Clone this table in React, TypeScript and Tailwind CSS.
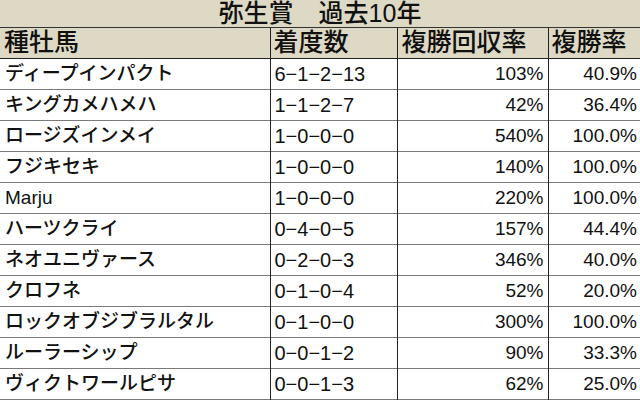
const rows = [
  ["ディープインパクト", "6−1−2−13", "103%", "40.9%"],
  ["キングカメハメハ", "1−1−2−7", "42%", "36.4%"],
  ["ロージズインメイ", "1−0−0−0", "540%", "100.0%"],
  ["フジキセキ", "1−0−0−0", "140%", "100.0%"],
  ["Marju", "1−0−0−0", "220%", "100.0%"],
  ["ハーツクライ", "0−4−0−5", "157%", "44.4%"],
  ["ネオユニヴァース", "0−2−0−3", "346%", "40.0%"],
  ["クロフネ", "0−1−0−4", "52%", "20.0%"],
  ["ロックオブジブラルタル", "0−1−0−0", "300%", "100.0%"],
  ["ルーラーシップ", "0−0−1−2", "90%", "33.3%"],
  ["ヴィクトワールピサ", "0−0−1−3", "62%", "25.0%"],
];

const font = { fontFamily: '"Liberation Sans", "Noto Sans CJK JP", sans-serif' };

export default function App() {
  return (
    <div className="w-[640px] h-[400px] overflow-hidden bg-white text-[#111]" style={font}>
      {/* title */}
      <div className="h-[28px] bg-[#ddd9c4] border-b border-[#333] flex justify-center">
        <div className="text-[25px] leading-[26px] font-medium">
          弥生賞　過去10年
        </div>
      </div>
      <table className="w-[640px] table-fixed border-collapse">
        <colgroup>
          <col className="w-[270px]" />
          <col className="w-[127px]" />
          <col className="w-[151px]" />
          <col className="w-[92px]" />
        </colgroup>
        <thead>
          <tr className="h-[30px] bg-[#ddd9c4] border-b border-[#222]">
            <th className="text-left font-medium text-[25px] leading-none pl-[4px] border-r border-[#222]">種牡馬</th>
            <th className="text-left font-medium text-[25px] leading-none pl-[3px] border-r border-[#222]">着度数</th>
            <th className="text-left font-medium text-[25px] leading-none pl-[4px] border-r border-[#222]">複勝回収率</th>
            <th className="text-left font-medium text-[25px] leading-none pl-[3px]">複勝率</th>
          </tr>
        </thead>
        <tbody>
          {rows.map((r) => (
            <tr key={r[0]} className="h-[31px] border-b border-[#7a7a7a]">
              <td className="text-[19px] font-medium leading-none pl-[5px] whitespace-nowrap border-r border-[#222]">{r[0]}</td>
              <td className="text-[20px] leading-none pl-[4px] whitespace-nowrap border-r border-[#222]">{r[1]}</td>
              <td className="text-[19px] leading-none text-right pr-[4px] border-r border-[#222]">{r[2]}</td>
              <td className="text-[19px] leading-none text-right pr-[3px]">{r[3]}</td>
            </tr>
          ))}
          <tr className="h-[20px]">
            <td className="border-r border-[#222]" />
            <td className="border-r border-[#222]" />
            <td className="border-r border-[#222]" />
            <td />
          </tr>
        </tbody>
      </table>
    </div>
  );
}
